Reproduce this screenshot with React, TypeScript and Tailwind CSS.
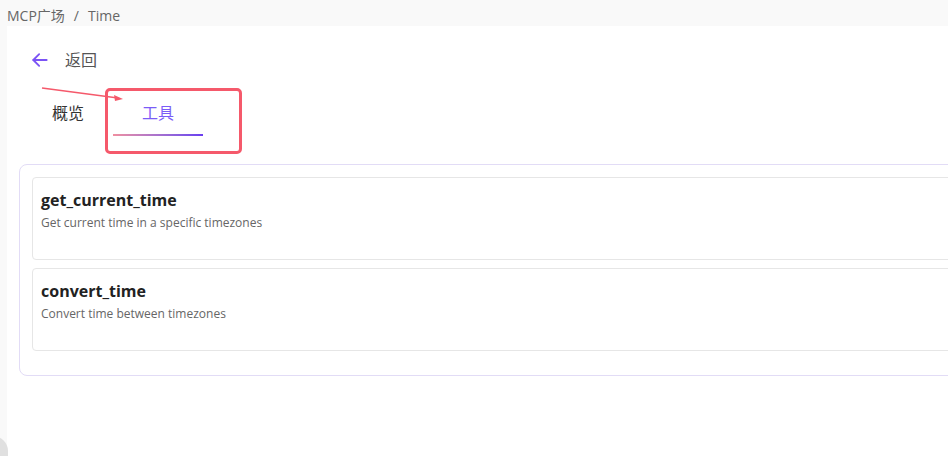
import React from "react";

const font = { fontFamily: '"Open Sans", "Noto Sans CJK SC", sans-serif' };

function ToolCard({ name, desc }: { name: string; desc: string }) {
  return (
    <div className="h-[83px] rounded-[4px] border border-[#e6e6e6] bg-white px-2 pt-[10px]">
      <div className="text-[16px] font-bold leading-[24px] text-[#222]">{name}</div>
      <div className="text-[12px] leading-[22px] text-[#666]">{desc}</div>
    </div>
  );
}

export default function App() {
  return (
    <div className="relative h-[456px] w-[948px] overflow-hidden bg-[#f9f9f9]" style={font}>
      <div className="flex h-[26px] items-center pl-[7px] pt-[4px] text-[14px] text-[#666]">
        <span>MCP广场</span>
        <span className="mx-[9px]">/</span>
        <span>Time</span>
      </div>
      <div className="ml-[7px] h-[430px] w-[1100px] bg-white pl-[12px]">
        <div className="flex h-[66px] items-center pl-[11px] pt-[1px]">
          <svg width="20" height="20" viewBox="0 0 24 24" fill="none" stroke="#7b53f5" strokeWidth="2.2" strokeLinecap="round" strokeLinejoin="round">
            <path d="M20 12H4" />
            <path d="M11 5l-7 7 7 7" />
          </svg>
          <span className="ml-[15px] text-[16px] text-[#555]">返回</span>
        </div>
        <div className="flex h-[72px] items-start pl-[33px]">
          <div className="pt-[9px] text-[16px] text-[#333]">概览</div>
          <div className="ml-[29px] flex w-[90px] flex-col items-center">
            <div className="pt-[9px] text-[16px] text-[#7b5cf7]">工具</div>
            <div className="mt-[9px] h-[2px] w-[90px] bg-gradient-to-r from-[#f08fa0] to-[#6a3cf0]" />
          </div>
        </div>
        <div className="rounded-[8px] border border-[#e2dcf6] pb-[24px] pl-[12px] pr-[12px] pt-[12px]">
          <div className="flex flex-col gap-[8px]">
            <ToolCard name="get_current_time" desc="Get current time in a specific timezones" />
            <ToolCard name="convert_time" desc="Convert time between timezones" />
          </div>
        </div>
      </div>
      {/* annotation overlay */}
      <div className="absolute left-[105px] top-[88px] h-[66px] w-[137px] rounded-[5px] border-[3px] border-[#f5596b]" />
      <svg className="absolute left-0 top-0" width="948" height="456" style={{ pointerEvents: "none" }}>
        <line x1="42" y1="88" x2="118" y2="98" stroke="#f5596b" strokeWidth="1.5" />
        <path d="M123 99 L114 95 L115 101 Z" fill="#f5596b" />
      </svg>
      <div className="absolute left-[-22px] top-[436px] h-[40px] w-[30px] rounded-full bg-[#e0e0e0]" />
    </div>
  );
}
